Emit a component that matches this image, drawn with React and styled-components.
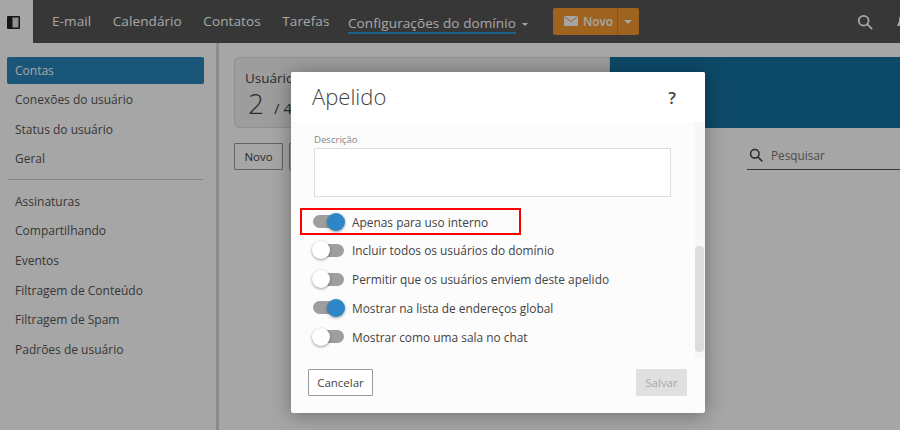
import React from 'react';
import styled, {createGlobalStyle} from 'styled-components';

const GlobalStyle = createGlobalStyle`
    html, body {
        margin: 0;
        height: 100%;
        overflow: hidden;
        background: #fff;
    }

    * {
        box-sizing: border-box;
    }

    body {
        font-family: 'Open Sans', 'Liberation Sans', sans-serif;
        color: #444;
    }
`;

const Page = styled.div`
    position: relative;
    width: 900px;
    height: 430px;
    overflow: hidden;
    display: flex;
    flex-direction: column;
`;

const Overlay = styled.div`
    position: absolute;
    inset: 0;
    background: rgba(0, 0, 0, 0.35);
`;

const Header = styled.header`
    height: 43px;
    flex: none;
    display: flex;
    align-items: center;
    background: #555;
`;

const MenuToggle = styled.div`
    width: 33px;
    height: 43px;
    padding: 1px 0 0 7px;
    background: #fff;
    display: flex;
    align-items: center;
`;

const Nav = styled.nav`
    display: flex;
    align-items: center;
    gap: 21.5px;
    margin-left: 19px;
    padding-top: 1px;
`;

const NavItem = styled.a`
    font-size: 13.5px;
    line-height: 16px;
    color: #fff;
    letter-spacing: 0.1px;
    white-space: nowrap;
    border-bottom: 2px solid ${p => (p.$active ? '#2a94cc' : 'transparent')};
`;

const NavGroup = styled.span`
    margin-left: -3px;
`;

const Caret = styled.span`
    display: inline-block;
    width: 0;
    height: 0;
    margin-left: 6px;
    vertical-align: 2px;
    border-left: 3px solid transparent;
    border-right: 3px solid transparent;
    border-top: 3px solid #fff;
`;

const SplitButton = styled.div`
    display: flex;
    height: 27px;
    margin-left: 25px;
    border-radius: 2px;
    overflow: hidden;
    background: #f39a30;
    color: #fff;
`;

const SplitMain = styled.div`
    width: 65px;
    display: flex;
    align-items: center;
    gap: 5px;
    padding: 0 0 1px 11px;
    font-size: 11.8px;
    font-weight: 600;
    border-right: 1px solid #d08020;
`;

const SplitArrow = styled.div`
    width: 21px;
    display: flex;
    align-items: center;
    justify-content: center;

    span {
        margin: 0;
        border-left-width: 4px;
        border-right-width: 4px;
        border-top-width: 4px;
    }
`;

const HeaderIcons = styled.div`
    margin-left: auto;
    display: flex;
    align-items: center;
    gap: 22px;
    margin-right: -13px;
`;

const Body = styled.div`
    flex: 1;
    display: flex;
    min-height: 0;
`;

const Sidebar = styled.aside`
    width: 219px;
    flex: none;
    padding: 13.5px 12px 0 7px;
    border-right: 3px solid #d8d8d8;
`;

const SideList = styled.div`
    display: flex;
    flex-direction: column;
`;

const SideItem = styled.a`
    height: 27px;
    margin-bottom: 2.6px;
    padding-left: 8px;
    display: flex;
    align-items: center;
    font-size: 12px;
    border-radius: 2px;
    color: ${p => (p.$active ? '#fff' : '#555')};
    background: ${p => (p.$active ? '#2884b8' : 'transparent')};
`;

const SideDivider = styled.hr`
    margin: 4px 1px 8px;
    border: none;
    border-top: 1px solid #ccc;
`;

const Main = styled.main`
    flex: 1;
    padding: 14px 0 0 15px;
`;

const Tiles = styled.div`
    display: flex;
    height: 71px;
`;

const StatTile = styled.div`
    width: 376px;
    padding: 12px 10px 0;
    background: #f2f2f2;
    border: 1px solid #ddd;
    border-radius: 5px 0 0 5px;
    font-size: 13.5px;
    line-height: 17px;
`;

const StatValue = styled.div`
    font-size: 28px;
    font-weight: 300;
    line-height: 30px;
    margin-top: 1px;
    padding-left: 3px;

    small {
        font-size: 15px;
        font-weight: 400;
        margin-left: 10px;
    }
`;

const BlueTile = styled.div`
    flex: 1;
    background: #1472a0;
`;

const Toolbar = styled.div`
    display: flex;
    align-items: flex-start;
    gap: 6px;
    margin-top: 15px;
`;

const ToolButton = styled.button`
    width: 49px;
    height: 27px;
    padding: 0 0 1px;
    font: inherit;
    font-size: 11.5px;
    color: #444;
    background: #fff;
    border: 1px solid #999;
    border-radius: 1px;
`;

const Search = styled.div`
    margin-left: auto;
    width: 153px;
    height: 27px;
    display: flex;
    align-items: center;
    gap: 8px;
    padding: 0 0 3px 2px;
    font-size: 11.8px;
    color: #777;
    border-bottom: 1px solid #555;
`;

const Modal = styled.div`
    position: absolute;
    left: 291px;
    top: 72px;
    width: 414px;
    height: 341px;
    display: flex;
    flex-direction: column;
    background: #fcfcfc;
    border-radius: 2px;
    box-shadow: 0 2px 20px rgba(0, 0, 0, 0.35);
`;

const ModalHeader = styled.div`
    height: 50px;
    flex: none;
    display: flex;
    align-items: center;
    justify-content: space-between;
    padding: 0 29px 0 21px;
    background: #fff;
    border-radius: 2px 2px 0 0;
`;

const ModalTitle = styled.h2`
    margin: -2px 0 0;
    font-size: 22px;
    font-weight: 300;
    color: #444;
`;

const Help = styled.span`
    font-size: 17px;
    font-weight: 600;
    color: #444;
`;

const ModalBody = styled.div`
    position: relative;
    height: 236px;
    flex: none;
    padding: 11px 34px 0 23px;
`;

const FieldLabel = styled.label`
    display: block;
    font-size: 9.6px;
    line-height: 13px;
    color: #888;
    margin-bottom: 2px;
`;

const Textarea = styled.div`
    height: 49px;
    background: #fff;
    border: 1px solid #ddd;
    margin-bottom: 14.5px;
`;

const OptionList = styled.div`
    display: flex;
    flex-direction: column;
    gap: 8.75px;
`;

const Option = styled.div`
    height: 20px;
    display: flex;
    align-items: center;
    gap: 8px;
    margin-left: -1px;
    font-size: 11.9px;
    color: #444;
    white-space: nowrap;
`;

const Switch = styled.span`
    position: relative;
    width: 31px;
    height: 13px;
    flex: none;
    border-radius: 7px;
    background: #9e9e9e;
`;

const Knob = styled.span`
    position: absolute;
    top: -2.5px;
    left: ${p => (p.$on ? '13.5px' : '-1px')};
    width: 18px;
    height: 18px;
    border-radius: 50%;
    background: ${p => (p.$on ? '#2e86c6' : '#fff')};
    box-shadow: 0 1px 3px rgba(0, 0, 0, 0.4);
`;

const Highlight = styled.div`
    position: absolute;
    left: 9px;
    top: 86px;
    width: 221px;
    height: 27px;
    border: 2px solid #f00;
`;

const ScrollTrack = styled.div`
    position: absolute;
    right: 0;
    top: 0;
    bottom: 0;
    width: 10px;
    background: #f7f7f7;
    display: flex;
    flex-direction: column;
    justify-content: flex-end;
    padding-bottom: 6px;
`;

const ScrollThumb = styled.div`
    height: 106px;
    width: 9px;
    border-radius: 4px;
    background: #ddd;
`;

const ModalFooter = styled.div`
    flex: 1;
    display: flex;
    align-items: flex-start;
    justify-content: space-between;
    padding: 11px 18px 0 17px;
`;

const FooterButton = styled.button`
    height: 27px;
    width: ${p => p.$width}px;
    padding: 0;
    font: inherit;
    font-size: 11.5px;
    border-radius: 1px;
    color: ${p => (p.disabled ? '#a8a8a8' : '#444')};
    background: ${p => (p.disabled ? '#e0e0e0' : '#fff')};
    border: 1px solid ${p => (p.disabled ? '#e0e0e0' : '#999')};
`;

const SearchIcon = ({size, color}) => (
    <svg fill={'none'} height={size} stroke={color} strokeLinecap={'round'} strokeWidth={2} viewBox={'0 0 18 18'} width={size}>
        <circle cx={'7.5'} cy={'7.5'} r={'5.5'} />
        <path d={'M11.5 11.5 L16.5 16.5'} />
    </svg>
);

const PanelIcon = () => (
    <svg height={13} viewBox={'0 0 13 13'} width={13}>
        <rect fill={'#222'} height={13} rx={1} width={13} />
        <rect fill={'#ddd'} height={10} width={6} x={5.5} y={1.5} />
    </svg>
);

const MailIcon = () => (
    <svg height={10} viewBox={'0 0 14 10'} width={14}>
        <rect fill={'#fff'} height={10} rx={1} width={14} />
        <path d={'M0.5 1 L7 5.5 L13.5 1'} fill={'none'} stroke={'#f39a30'} strokeWidth={1} />
    </svg>
);

const BellIcon = () => (
    <svg height={18} viewBox={'0 0 18 18'} width={18}>
        <path d={'M9 1 C5 1 4 4 4 8 L2 13 L16 13 L14 8 C14 4 13 1 9 1 Z'} fill={'#fff'} />
    </svg>
);

const topLinks = ['E-mail', 'Calendário', 'Contatos', 'Tarefas'];
const accountLinks = ['Contas', 'Conexões do usuário', 'Status do usuário', 'Geral'];
const otherLinks = ['Assinaturas', 'Compartilhando', 'Eventos', 'Filtragem de Conteúdo', 'Filtragem de Spam', 'Padrões de usuário'];
const options = [
    {label: 'Apenas para uso interno', on: true},
    {label: 'Incluir todos os usuários do domínio', on: false},
    {label: 'Permitir que os usuários enviem deste apelido', on: false},
    {label: 'Mostrar na lista de endereços global', on: true},
    {label: 'Mostrar como uma sala no chat', on: false},
];

const App = () => (
    <Page>
        <GlobalStyle />
        <Header>
            <MenuToggle>
                <PanelIcon />
            </MenuToggle>
            <Nav>
                {topLinks.map(link => (
                    <NavItem key={link}>{link}</NavItem>
                ))}
                <NavGroup>
                    <NavItem $active>{'Configurações do domínio'}</NavItem>
                    <Caret />
                </NavGroup>
            </Nav>
            <SplitButton>
                <SplitMain>
                    <MailIcon />
                    {'Novo'}
                </SplitMain>
                <SplitArrow>
                    <Caret />
                </SplitArrow>
            </SplitButton>
            <HeaderIcons>
                <SearchIcon color={'#fff'} size={16} />
                <BellIcon />
            </HeaderIcons>
        </Header>
        <Body>
            <Sidebar>
                <SideList>
                    {accountLinks.map((link, i) => (
                        <SideItem $active={i === 0} key={link}>
                            {link}
                        </SideItem>
                    ))}
                    <SideDivider />
                    {otherLinks.map(link => (
                        <SideItem key={link}>{link}</SideItem>
                    ))}
                </SideList>
            </Sidebar>
            <Main>
                <Tiles>
                    <StatTile>
                        {'Usuários'}
                        <StatValue>
                            {'2'}
                            <small>{'/ 40'}</small>
                        </StatValue>
                    </StatTile>
                    <BlueTile />
                </Tiles>
                <Toolbar>
                    <ToolButton>{'Novo'}</ToolButton>
                    <ToolButton />
                    <Search>
                        <SearchIcon color={'#444'} size={14} />
                        {'Pesquisar'}
                    </Search>
                </Toolbar>
            </Main>
        </Body>
        <Overlay />
        <Modal>
            <ModalHeader>
                <ModalTitle>{'Apelido'}</ModalTitle>
                <Help>{'?'}</Help>
            </ModalHeader>
            <ModalBody>
                <FieldLabel>{'Descrição'}</FieldLabel>
                <Textarea />
                <OptionList>
                    {options.map(option => (
                        <Option key={option.label}>
                            <Switch>
                                <Knob $on={option.on} />
                            </Switch>
                            {option.label}
                        </Option>
                    ))}
                </OptionList>
                <Highlight />
                <ScrollTrack>
                    <ScrollThumb />
                </ScrollTrack>
            </ModalBody>
            <ModalFooter>
                <FooterButton $width={65}>{'Cancelar'}</FooterButton>
                <FooterButton $width={51} disabled>
                    {'Salvar'}
                </FooterButton>
            </ModalFooter>
        </Modal>
    </Page>
);

export default App;
